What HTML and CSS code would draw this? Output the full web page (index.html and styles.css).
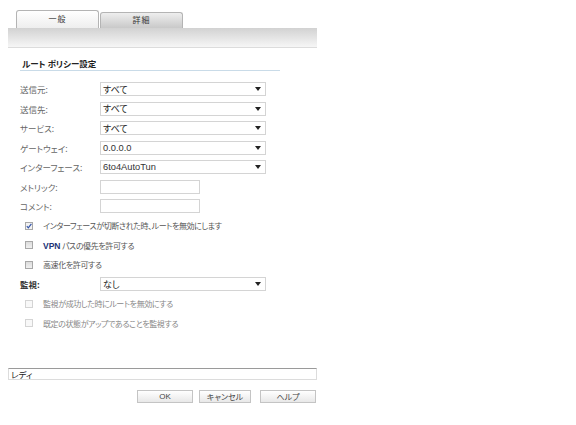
FILE: index.html
```html
<!DOCTYPE html>
<html lang="ja">
<head>
<meta charset="utf-8">
<title>ルート ポリシー設定</title>
<link rel="stylesheet" href="styles.css">
</head>
<body>
<div class="page">
  <div class="tabs">
    <div class="tab active">一般</div>
    <div class="tab">詳細</div>
  </div>
  <div class="toolbar"></div>

  <div class="section">
    <div class="title">ルート ポリシー設定</div>
    <div class="form">
      <div class="row"><span class="label">送信元:</span><div class="select"><span>すべて</span><i class="arrow"></i></div></div>
      <div class="row"><span class="label">送信先:</span><div class="select"><span>すべて</span><i class="arrow"></i></div></div>
      <div class="row"><span class="label">サービス:</span><div class="select"><span>すべて</span><i class="arrow"></i></div></div>
      <div class="row"><span class="label">ゲートウェイ:</span><div class="select"><span class="latin">0.0.0.0</span><i class="arrow"></i></div></div>
      <div class="row"><span class="label">インターフェース:</span><div class="select"><span class="latin">6to4AutoTun</span><i class="arrow"></i></div></div>
      <div class="row"><span class="label">メトリック:</span><div class="input"></div></div>
      <div class="row"><span class="label">コメント:</span><div class="input"></div></div>
      <div class="row check"><span class="box checked"><svg viewBox="0 0 8 8" width="8" height="8"><path d="M1.8 4.2 L3.3 5.8 L6.4 1.8" fill="none" stroke="#3355aa" stroke-width="1.2"/></svg></span><span class="ctext">インターフェースが切断された時、ルートを無効にします</span></div>
      <div class="row check"><span class="box"></span><span class="ctext"><span class="vpn">VPN</span> パスの優先を許可する</span></div>
      <div class="row check"><span class="box"></span><span class="ctext">高速化を許可する</span></div>
      <div class="row"><span class="label strong">監視:</span><div class="select"><span>なし</span><i class="arrow"></i></div></div>
      <div class="row check"><span class="box disabled"></span><span class="ctext dim">監視が成功した時にルートを無効にする</span></div>
      <div class="row check"><span class="box disabled"></span><span class="ctext dim">既定の状態がアップであることを監視する</span></div>
    </div>
  </div>

  <div class="status">レディ</div>
  <div class="buttons">
    <div class="btn ok">OK</div>
    <div class="btn cancel">キャンセル</div>
    <div class="btn help">ヘルプ</div>
  </div>
</div>
</body>
</html>
```

FILE: styles.css
```css
html, body {
  margin: 0;
  padding: 0;
  background: #ffffff;
}
body {
  font-family: "Noto Sans CJK JP", "Liberation Sans", sans-serif;
  font-size: 8.5px;
  color: #333;
  font-feature-settings: "palt";
}
.page {
  margin-left: 8px;
  width: 309px;
}
.tabs {
  display: flex;
  align-items: flex-end;
  height: 28px;
  padding-left: 8px;
  box-sizing: border-box;
}
.tab {
  width: 83px;
  height: 16px;
  box-sizing: border-box;
  border: 1px solid #b4b4b4;
  border-bottom: none;
  border-radius: 3px 3px 0 0;
  background: linear-gradient(#eeeeee, #c9c9c9);
  text-align: center;
  line-height: 14px;
  color: #333;
  font-size: 8px;
  letter-spacing: 1px;
}
.tab.active {
  height: 18px;
  line-height: 15px;
  background: linear-gradient(#ffffff, #eeeeee);
  margin-right: 1px;
}
.toolbar {
  height: 20px;
  box-sizing: border-box;
  background: linear-gradient(#d2d2d2, #f6f6f6);
  border-bottom: 1px solid #dcdcdc;
}
.section {
  margin-left: 12px;
  width: 260px;
}
.title {
  margin-top: 10px;
  height: 11px;
  line-height: 11px;
  padding-bottom: 1px;
  padding-left: 2px;
  border-bottom: 1px solid #c9dbe8;
  font-weight: bold;
  color: #222;
  font-size: 8.5px;
}
.form {
  margin-top: 8.25px;
}
.row {
  height: 19.5px;
  display: flex;
  align-items: center;
}
.label {
  width: 80px;
  flex: none;
  color: #666;
}
.label.strong {
  color: #333;
  font-weight: bold;
}
.select {
  width: 166px;
  height: 14px;
  box-sizing: border-box;
  border: 1px solid #d4d4d4;
  background: #fff;
  display: flex;
  align-items: center;
  justify-content: space-between;
  padding: 0 4px 0 2px;
  color: #222;
  font-size: 9px;
}
.select .latin {
  font-family: "Liberation Sans", sans-serif;
  font-size: 9.3px;
  color: #333;
}
.arrow {
  width: 0;
  height: 0;
  border-left: 3px solid transparent;
  border-right: 3px solid transparent;
  border-top: 4px solid #222;
}
.input {
  width: 100px;
  height: 14px;
  box-sizing: border-box;
  border: 1px solid #d4d4d4;
  background: #fff;
}
.check {
  padding-left: 5px;
}
.box {
  width: 8px;
  height: 8px;
  box-sizing: border-box;
  border: 1px solid #a8a8a8;
  background: linear-gradient(#dcdcdc, #f0f0f0);
  margin-right: 10px;
  flex: none;
  display: flex;
}
.box.checked {
  background: #f2f2f2;
}
.box.checked svg {
  display: block;
  margin: -1px;
}
.box.disabled {
  border-color: #d4d4d4;
  background: #f8f8f8;
}
.ctext {
  color: #555;
  font-size: 8px;
  letter-spacing: -0.4px;
  white-space: nowrap;
}
.ctext.dim {
  color: #888;
}
.vpn {
  color: #223377;
  font-family: "Liberation Sans", sans-serif;
  font-weight: bold;
  font-size: 8.5px;
  letter-spacing: 0;
}
.status {
  margin-top: 35px;
  height: 12px;
  box-sizing: border-box;
  border: 1px solid #dcdcdc;
  border-top-color: #9a9a9a;
  padding-left: 2px;
  line-height: 10px;
  color: #222;
  font-size: 8.5px;
}
.buttons {
  display: flex;
  justify-content: flex-end;
  margin-top: 10px;
  padding-right: 1px;
  gap: 0;
}
.btn {
  height: 13px;
  box-sizing: border-box;
  border: 1px solid #c4c4c4;
  background: linear-gradient(#ffffff, #e8e8e8);
  text-align: center;
  line-height: 11px;
  color: #444;
  font-size: 8px;
}
.btn.ok { width: 56px; font-family: "Liberation Sans", sans-serif; }
.btn.cancel { width: 52px; margin-left: 6px; }
.btn.help { width: 56px; margin-left: 9px; }
```
